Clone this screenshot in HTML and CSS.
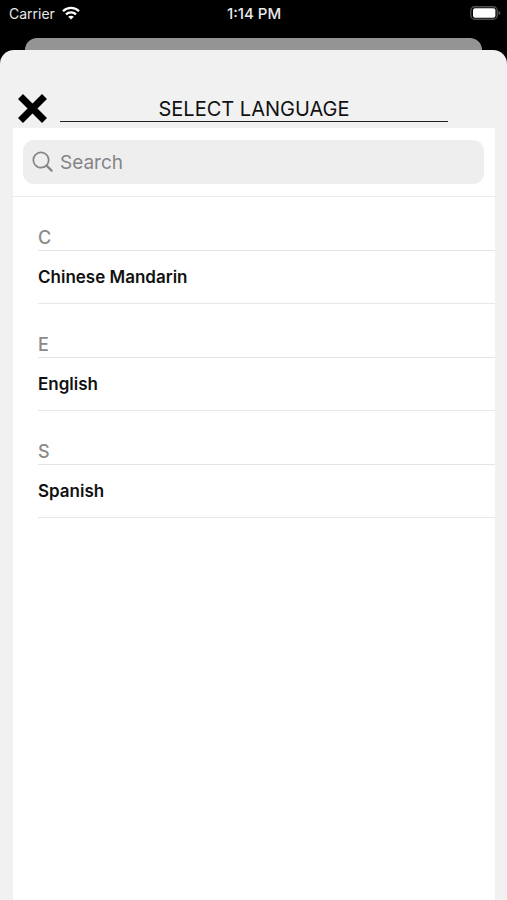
FILE: index.html
```html
<!DOCTYPE html>
<html lang="en">
<head>
<meta charset="utf-8">
<meta name="viewport" content="width=device-width, initial-scale=1">
<title>Select Language</title>
<link rel="stylesheet" href="styles.css">
</head>
<body>
<div class="status">
  <div class="carrier">
    <span>Carrier</span>
    <svg class="wifi" viewBox="0 0 18 14" width="18" height="14" aria-hidden="true">
      <path d="M1 5.2C5.4.8 12.6.8 17 5.2M4 8.3c2.8-2.7 7.2-2.7 10 0" fill="none" stroke="#fff" stroke-width="2.3"/>
      <path d="M9 13.6 6.2 10.8c1.6-1.4 4-1.4 5.6 0z" fill="#fff"/>
    </svg>
  </div>
  <time class="clock">1:14 PM</time>
  <svg class="battery" viewBox="0 0 31 14" width="31" height="14" aria-hidden="true">
    <rect x=".8" y=".8" width="26.4" height="12.4" rx="3.8" fill="none" stroke="#505052" stroke-width="1.4"/>
    <rect x="3" y="2.2" width="22.4" height="9.6" rx="2" fill="#fff"/>
    <path d="M28.5 4.8c2.6.8 2.6 3.6 0 4.4z" fill="#505052"/>
  </svg>
</div>
<div class="behind"></div>
<main class="sheet">
  <header class="header">
    <button class="close" type="button" aria-label="Close">
      <svg viewBox="0 0 30 30" width="30" height="30" aria-hidden="true">
        <path d="M3.5 3.5 27.5 27.5M27.5 3.5 3.5 27.5" stroke="#000" stroke-width="7"/>
      </svg>
    </button>
    <h1 class="title">SELECT LANGUAGE</h1>
  </header>
  <div class="panel">
    <form class="search-bar">
      <label class="search">
        <svg viewBox="0 0 22 22" width="22" height="22" aria-hidden="true">
          <circle cx="9" cy="9" r="7.7" fill="none" stroke="#858588" stroke-width="1.7"/>
          <path d="m14.6 14.6 5 5" stroke="#858588" stroke-width="2.2" stroke-linecap="round"/>
        </svg>
        <input type="search" placeholder="Search" aria-label="Search">
      </label>
    </form>
    <section class="group">
      <h2 class="letter">C</h2>
      <button class="language" type="button">Chinese Mandarin</button>
    </section>
    <section class="group">
      <h2 class="letter">E</h2>
      <button class="language" type="button">English</button>
    </section>
    <section class="group">
      <h2 class="letter">S</h2>
      <button class="language" type="button">Spanish</button>
    </section>
  </div>
</main>
</body>
</html>
```
FILE: styles.css
```css
* {
  box-sizing: border-box;
}

body {
  display: flex;
  flex-direction: column;
  min-height: 100vh;
  margin: 0;
  background: #000;
  color: #111;
  font-family: Inter, "Liberation Sans", sans-serif;
}

.status {
  display: grid;
  grid-template-columns: 1fr auto 1fr;
  align-items: center;
  height: 38px;
  padding: 0 6px 10px 7px;
  color: #e8e8e8;
  font-size: 14px;
  line-height: 20px;
}

.carrier {
  display: flex;
  align-items: center;
  gap: 7px;
  padding-left: 2px;
}

.wifi,
.battery {
  margin-bottom: 2px;
}

.clock {
  font-size: 15px;
  font-weight: 500;
}

.battery {
  justify-self: end;
}

.behind {
  height: 12px;
  margin: 0 25px;
  border-radius: 12px 12px 0 0;
  background: #949494;
}

.sheet {
  display: flex;
  flex: 1;
  flex-direction: column;
  padding: 0 12px 0 13px;
  border-radius: 14px 14px 0 0;
  background: #f1f1f1;
}

.header {
  display: flex;
  align-items: flex-end;
  gap: 13px;
  height: 78px;
  padding: 0 47px 5px 4px;
}

.close {
  padding: 0;
  border: 0;
  background: none;
  line-height: 0;
}

.title {
  flex: 1;
  margin: 0 0 1px;
  border-bottom: 1px solid #222;
  font-size: 20px;
  font-weight: 400;
  line-height: 24px;
  text-align: center;
}

.panel {
  flex: 1;
  background: #fff;
}

.search-bar {
  padding: 12px 11px 12px 10px;
  border-bottom: 1px solid #ebebeb;
}

.search {
  display: flex;
  align-items: center;
  gap: 6px;
  height: 44px;
  padding: 0 9px;
  border-radius: 11px;
  background: #eee;
}

.search input {
  flex: 1;
  min-width: 0;
  padding: 2px 0 0;
  border: 0;
  outline: 0;
  background: none;
  font-family: inherit;
  font-size: 19px;
  line-height: 24px;
}

.search input::placeholder {
  color: #858588;
}

.group {
  padding-left: 25px;
}

.letter {
  margin: 0;
  padding-top: 29px;
  border-bottom: 1px solid #e4e4e4;
  color: #8a8a8a;
  font-size: 18px;
  font-weight: 500;
  line-height: 24px;
}

.language {
  display: block;
  width: 100%;
  height: 53px;
  padding: 0;
  border: 0;
  border-bottom: 1px solid #e8e8e8;
  background: none;
  color: #111;
  font-family: inherit;
  font-size: 17px;
  font-weight: 600;
  text-align: left;
}
```
